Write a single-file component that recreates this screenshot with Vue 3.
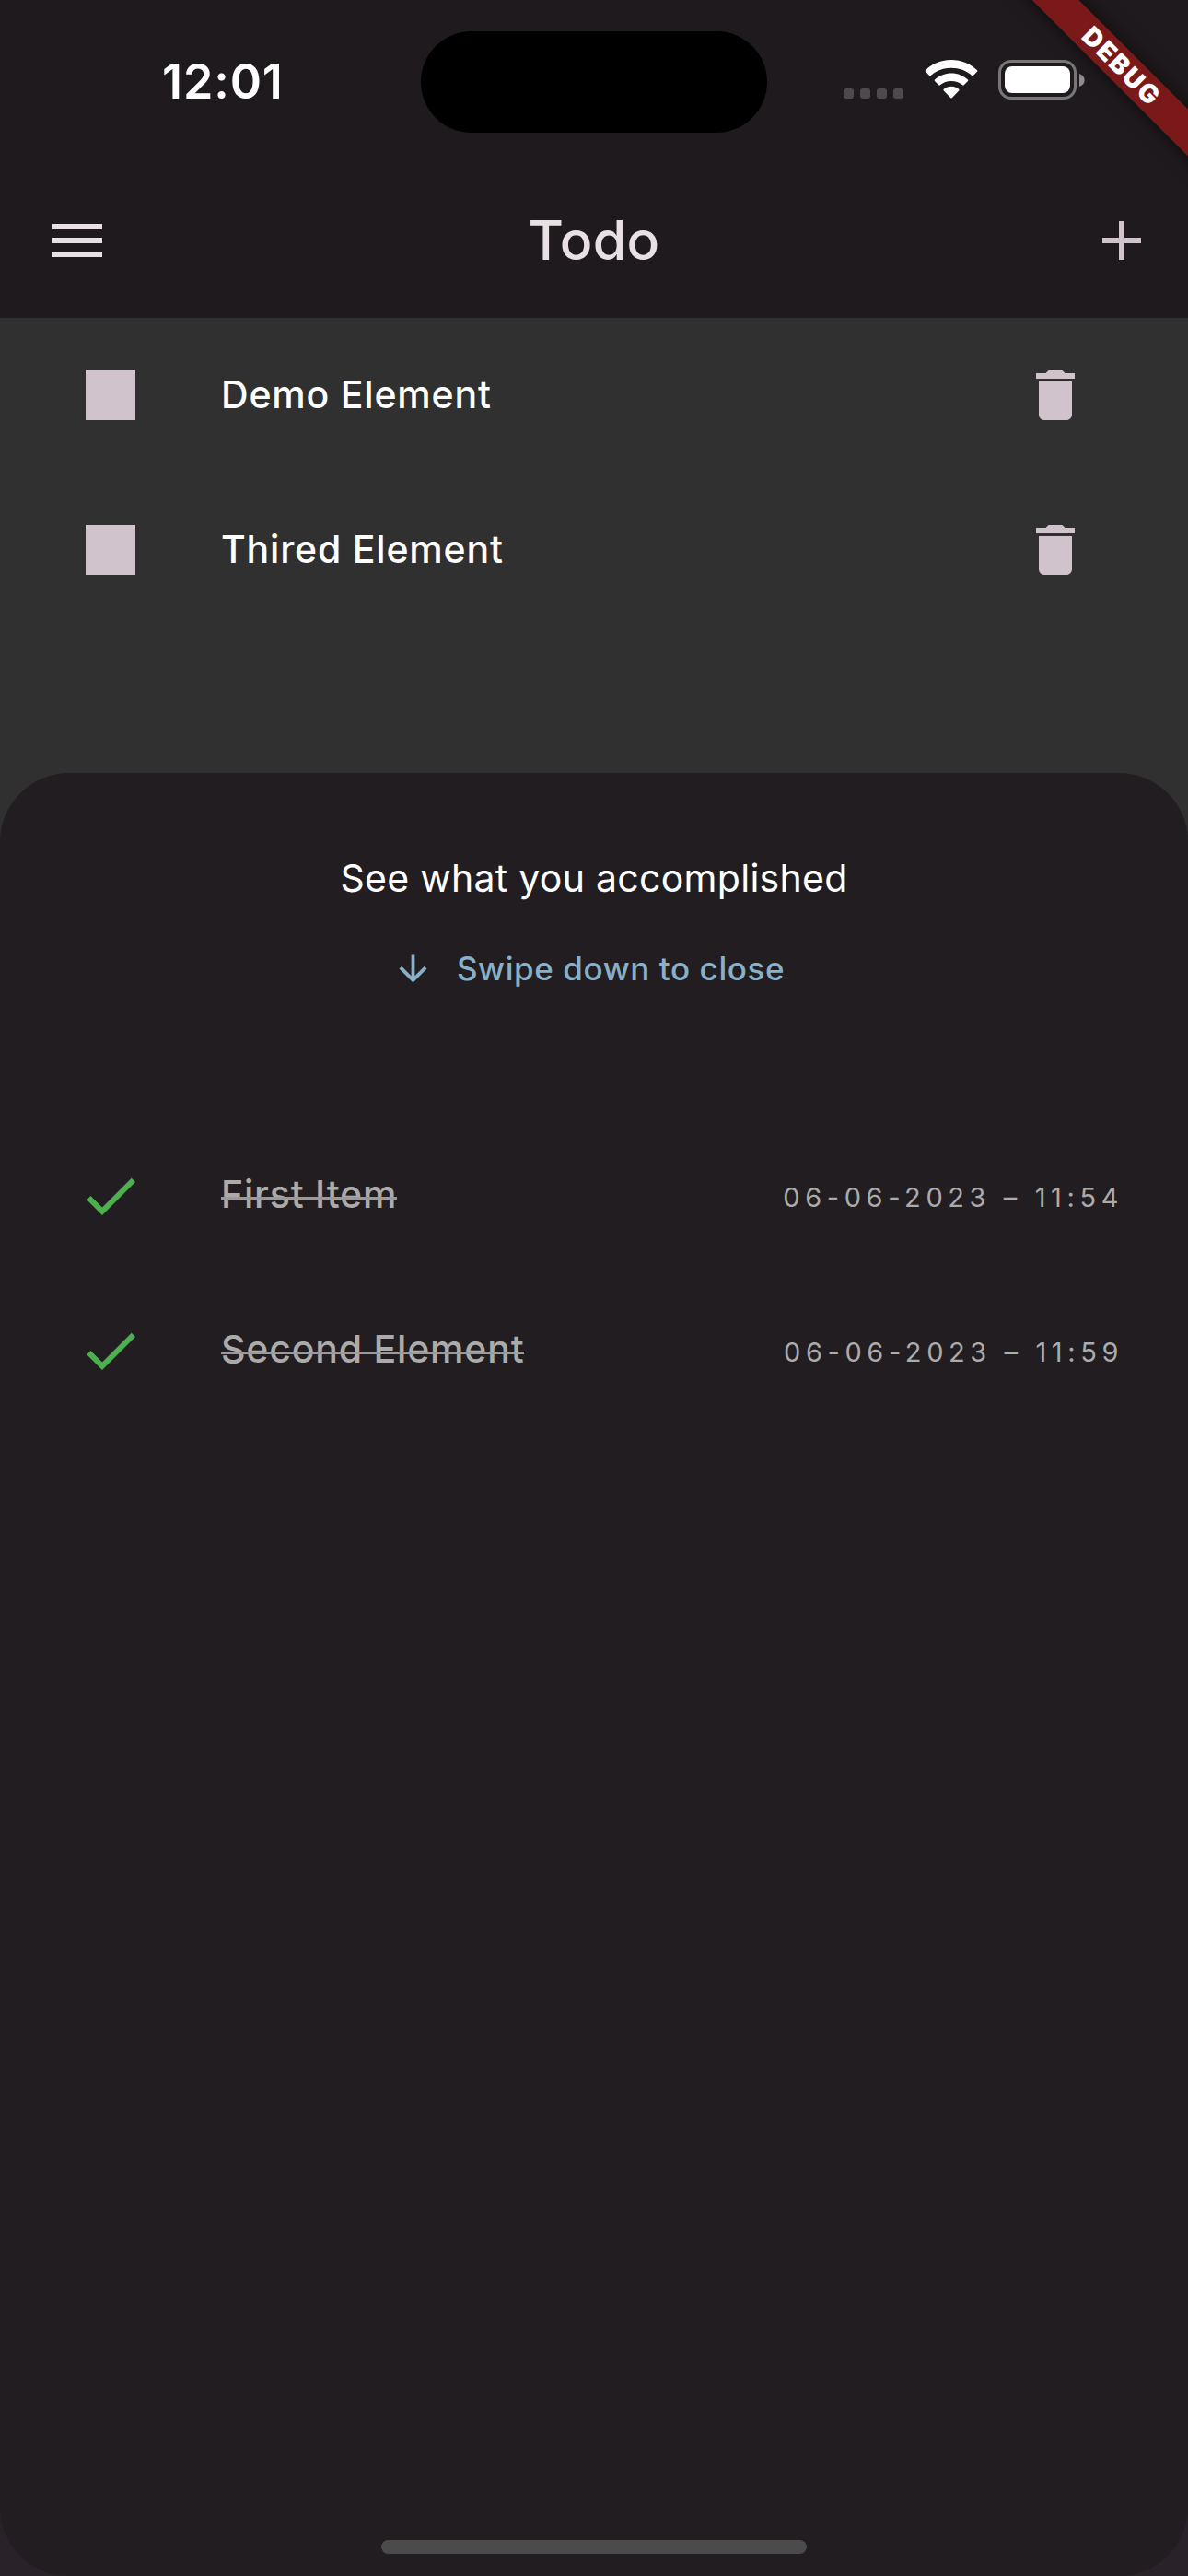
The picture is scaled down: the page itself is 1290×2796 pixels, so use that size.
<script setup>
import { ref } from 'vue'

const todos = ref([
  { id: 1, title: 'Demo Element' },
  { id: 2, title: 'Thired Element' },
])

const accomplished = ref([
  { id: 3, title: 'First Item', date: '06-06-2023 – 11:54' },
  { id: 4, title: 'Second Element', date: '06-06-2023 – 11:59' },
])
</script>

<template>
  <div class="screen">
    <header class="top">
      <div class="status">
        <div class="clock">12:01</div>
        <div class="island"></div>
        <div class="indicators">
          <div class="cellular"><i v-for="n in 4" :key="n"></i></div>
          <svg class="wifi" viewBox="0 0 58 42" width="58" height="42">
            <path fill="#fff" d="M29 0C39.800 0 49.900 4.200 57 11.200Q57.700 12 57 12.700L52.800 17Q52 17.700 51.300 17C45.300 11.500 37.400 8.700 29 8.700S12.700 11.500 6.700 17Q6 17.700 5.200 17L1 12.700Q.300 12 1 11.200C8.100 4.200 18.200 0 29 0Z" />
            <path fill="#fff" d="M29 14.400C36 14.400 42.300 17.100 47 21.500Q47.700 22.300 47 23L42.700 27.300Q42 28 41.200 27.300C37.800 24.300 33.600 22.900 29 22.900S20.200 24.300 16.800 27.300Q16 28 15.300 27.300L11 23Q10.300 22.300 11 21.500C15.700 17.100 22 14.400 29 14.400Z" />
            <path fill="#fff" d="M29 28.800C32 28.800 34.900 29.900 37.200 31.800Q38 32.600 37.200 33.400L29.700 41.200Q29 42 28.300 41.200L20.800 33.400Q20 32.600 20.800 31.800C23.100 29.900 26 28.800 29 28.800Z" />
          </svg>
          <div class="battery">
            <div class="cell"><div class="charge"></div></div>
            <svg viewBox="0 0 6 14" width="6" height="14"><path fill="#8f8d8e" d="M0 0C3.500 1.200 5.700 3.800 5.700 7S3.500 12.800 0 14Z" /></svg>
          </div>
        </div>
      </div>
      <div class="bar">
        <svg class="icon" viewBox="0 0 24 24" fill="#e9e0e4"><path d="M3 18h18v-2H3v2zm0-5h18v-2H3v2zm0-7v2h18V6H3z" /></svg>
        <h1>Todo</h1>
        <svg class="icon" viewBox="0 0 24 24" fill="#d0c3cc"><path d="M19 13h-6v6h-2v-6H5v-2h6V5h2v6h6v2z" /></svg>
      </div>
      <div class="banner"><span>DEBUG</span></div>
    </header>

    <ul class="todos">
      <li v-for="item in todos" :key="item.id" class="row">
        <svg class="icon" viewBox="0 0 24 24" fill="#d0c3cc"><path d="M3 3h18v18H3z" /></svg>
        <span class="title">{{ item.title }}</span>
        <svg class="icon trash" viewBox="0 0 24 24" fill="#d0c3cc"><path d="M6 19c0 1.100.9 2 2 2h8c1.100 0 2-.9 2-2V7H6v12zM19 4h-3.500l-1-1h-5l-1 1H5v2h14V4z" /></svg>
      </li>
    </ul>

    <div class="sheet-area">
      <section class="sheet">
        <h2>See what you accomplished</h2>
        <div class="hint">
          <svg viewBox="0 0 24 24" width="45" height="45" fill="#87b0c9"><path d="M20 12l-1.410-1.410L13 16.170V4h-2v12.170l-5.580-5.590L4 12l8 8 8-8z" /></svg>
          <span>Swipe down to close</span>
        </div>
        <ul class="done">
          <li v-for="item in accomplished" :key="item.id" class="row">
            <svg class="icon" viewBox="0 0 24 24" fill="#4caf50"><path d="M9 16.170L4.830 12l-1.420 1.410L9 19 21 7l-1.410-1.410z" /></svg>
            <span class="title"><s>{{ item.title }}</s></span>
            <time>{{ item.date }}</time>
          </li>
        </ul>
        <div class="home"></div>
      </section>
    </div>
  </div>
</template>

<style>
body {
  margin: 0;
  background: #303030;
}
</style>

<style scoped>
.screen {
  display: flex;
  flex-direction: column;
  width: 1290px;
  height: 2796px;
  overflow: hidden;
  background: #303030;
  font-family: Inter, "Liberation Sans", sans-serif;
}
h1, h2, ul {
  margin: 0;
  padding: 0;
  list-style: none;
  font-weight: 400;
}
svg {
  display: block;
  flex: none;
}
.icon {
  width: 72px;
  height: 72px;
}

.top {
  position: relative;
  overflow: hidden;
  flex: none;
  height: 345px;
  background: #1f1a1d;
}
.status {
  display: grid;
  grid-template-columns: 457px 376px 1fr;
  height: 177px;
  align-items: start;
}
.clock {
  padding: 59px 0 0 176px;
  font-size: 52px;
  line-height: 60px;
  font-weight: 600;
  letter-spacing: 0.9px;
  color: #fff;
}
.island {
  height: 110px;
  margin-top: 34px;
  border-radius: 55px;
  background: #000;
}
.indicators {
  display: flex;
  align-items: flex-start;
  padding: 65px 0 0 83px;
}
.cellular {
  display: flex;
  gap: 7px;
  margin: 31px 23px 0 0;
}
.cellular i {
  width: 11px;
  height: 11px;
  border-radius: 3px;
  background: #4c4a4c;
}
.battery {
  display: flex;
  align-items: center;
  gap: 3px;
  margin-left: 22px;
}
.cell {
  box-sizing: border-box;
  width: 85px;
  height: 43px;
  padding: 4px;
  border: 3px solid #797678;
  border-radius: 14px;
}
.charge {
  height: 29px;
  border-radius: 8px;
  background: #fff;
}
.bar {
  display: flex;
  align-items: center;
  justify-content: space-between;
  height: 168px;
  padding: 0 36px 0 48px;
}
h1 {
  margin-right: 12px;
  font-size: 59px;
  line-height: 72px;
  font-weight: 450;
  letter-spacing: 0.3px;
  color: #e9e0e4;
}
.banner {
  position: absolute;
  left: 1068px;
  top: 54px;
  width: 300px;
  height: 36px;
  transform: rotate(45deg);
  background: #7b191a;
  box-shadow: 0 0 18px 2px rgba(0, 0, 0, 0.5);
  text-align: center;
  font-size: 28px;
  line-height: 36px;
  font-weight: 900;
  color: #fff;
}
.banner span {
  letter-spacing: 2px;
}

.row {
  display: flex;
  align-items: center;
  height: 168px;
  padding-left: 84px;
}
.title {
  flex: 1;
  padding-left: 84px;
  font-size: 41px;
  line-height: 50px;
  font-weight: 450;
  letter-spacing: 0.8px;
  color: #fff;
}
.todos {
  flex: none;
  height: 494px;
}
.todos .title {
  margin-top: -2px;
}
.trash {
  margin-right: 108px;
}

.sheet-area {
  flex: 1;
  background: linear-gradient(#303030 50%, #292228 50%);
}
.sheet {
  display: flex;
  flex-direction: column;
  align-items: center;
  box-sizing: border-box;
  height: 100%;
  padding: 89px 0 24px;
  border-radius: 75px;
  background: #221d20;
}
h2 {
  font-size: 41px;
  line-height: 50px;
  letter-spacing: 0.28px;
  color: #fff;
}
.hint {
  display: flex;
  align-items: center;
  gap: 25px;
  height: 50px;
  margin: 48px 0 138px -12px;
  font-size: 35px;
  font-weight: 450;
  letter-spacing: 0.58px;
  color: #87b0c9;
}
.done {
  flex: 1;
  width: 100%;
}
.done .title {
  margin-top: -4px;
  color: #ababab;
}
.done s {
  position: relative;
  text-decoration: none;
}
.done s::after {
  content: "";
  position: absolute;
  left: 0;
  right: 0;
  top: 28px;
  height: 3px;
  background: #9b9a9b;
}
time {
  margin: 4px 70px 0 0;
  font-size: 29px;
  line-height: 36px;
  letter-spacing: 5.6px;
  color: #ababab;
}
.home {
  width: 462px;
  height: 15px;
  border-radius: 8px;
  background: #4b4b4b;
}
</style>
